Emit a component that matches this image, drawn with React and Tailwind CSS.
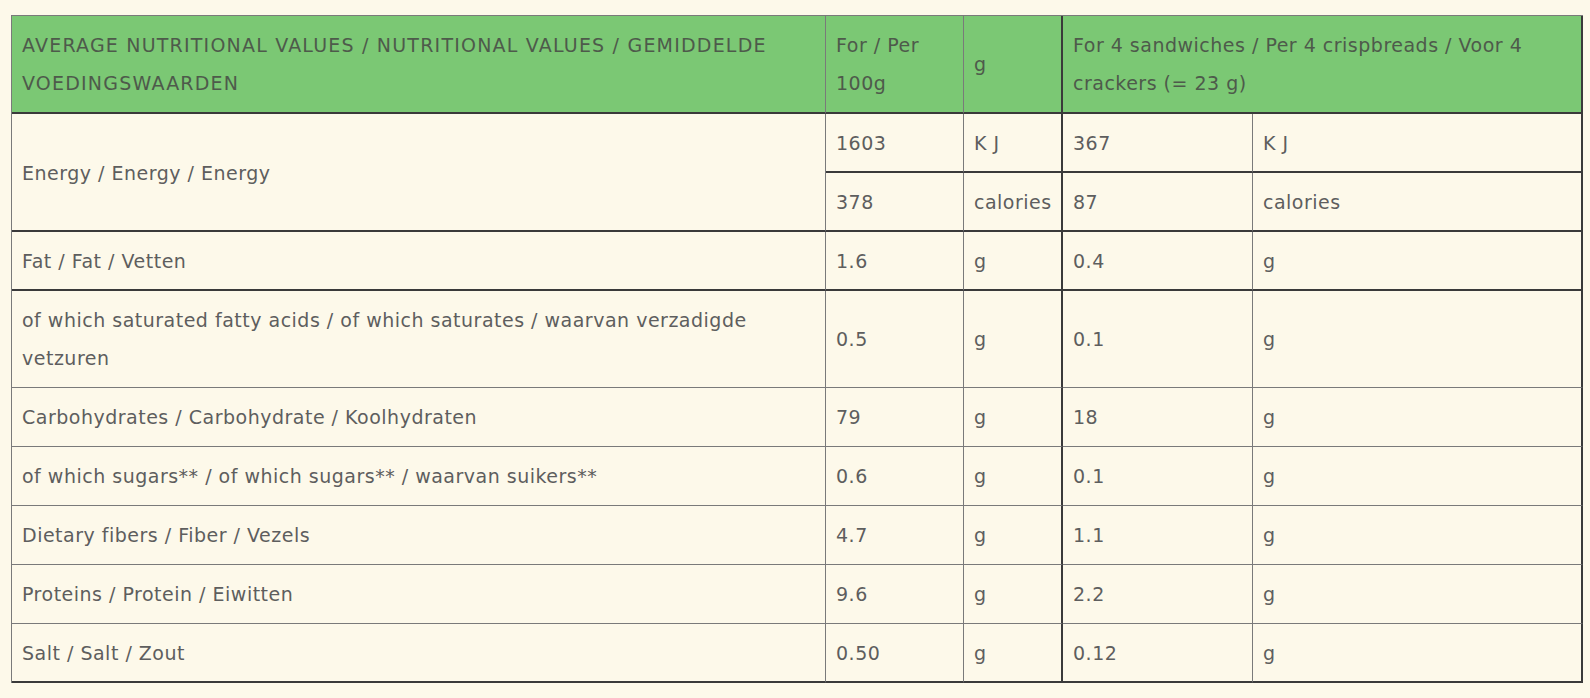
import React from "react";

const L = "border-b border-b-[#7a7a7a]";
const D = "border-b-2 border-b-[#3a3a3a]";

const rows = [
  { label: "Fat / Fat / Vetten", a: "1.6", au: "g", b: "0.4", bu: "g", dark: true },
  { label: "of which saturated fatty acids / of which saturates / waarvan verzadigde vetzuren", a: "0.5", au: "g", b: "0.1", bu: "g" },
  { label: "Carbohydrates / Carbohydrate / Koolhydraten", a: "79", au: "g", b: "18", bu: "g" },
  { label: "of which sugars** / of which sugars** / waarvan suikers**", a: "0.6", au: "g", b: "0.1", bu: "g" },
  { label: "Dietary fibers / Fiber / Vezels", a: "4.7", au: "g", b: "1.1", bu: "g" },
  { label: "Proteins / Protein / Eiwitten", a: "9.6", au: "g", b: "2.2", bu: "g" },
  { label: "Salt / Salt / Zout", a: "0.50", au: "g", b: "0.12", bu: "g", dark: true },
];

const cell = "px-[10px] pt-[10px] align-middle text-left font-normal";
const rl = "border-r border-r-[#7a7a7a]";
const rd = "border-r-2 border-r-[#3a3a3a]";
const pL = "pb-[10px]";
const pD = "pb-[9px]";

export default function App() {
  return (
    <div className="min-h-[698px] w-full bg-[#fdf9ea] pt-[15px] pl-[11px]" style={{ fontFamily: '"DejaVu Sans", "Liberation Sans", sans-serif' }}>
      <table className="w-[1571px] table-fixed border-separate border-spacing-0 border-l border-t border-[#7a7a7a] text-[19px] leading-[38px] tracking-[0.5px] text-[#5e5e5e] font-light">
        <colgroup>
          <col className="w-[814px]" />
          <col className="w-[138px]" />
          <col className="w-[99px]" />
          <col className="w-[190px]" />
          <col className="w-[330px]" />
        </colgroup>
        <thead>
          <tr className="bg-[#7bc874] text-[#4e5a4b]">
            <th className={`${cell} ${pL} ${rl} ${D} tracking-[1.2px]`}>AVERAGE NUTRITIONAL VALUES / NUTRITIONAL VALUES / GEMIDDELDE VOEDINGSWAARDEN</th>
            <th className={`${cell} ${pL} ${rl} ${D}`}>For / Per 100g</th>
            <th className={`${cell} ${pL} ${rd} ${D}`}>g</th>
            <th colSpan={2} className={`${cell} ${pL} ${rd} ${D}`}>For 4 sandwiches / Per 4 crispbreads / Voor 4 crackers (= 23 g)</th>
          </tr>
        </thead>
        <tbody>
          <tr>
            <td rowSpan={2} className={`${cell} ${pD} ${rl} ${D}`}>Energy / Energy / Energy</td>
            <td className={`${cell} ${pD} ${rl} ${D}`}>1603</td>
            <td className={`${cell} ${pD} ${rd} ${D}`}>K J</td>
            <td className={`${cell} ${pD} ${rl} ${D}`}>367</td>
            <td className={`${cell} ${pD} ${rd} ${D}`}>K J</td>
          </tr>
          <tr>
            <td className={`${cell} ${pD} ${rl} ${D}`}>378</td>
            <td className={`${cell} ${pD} ${rd} ${D}`}>calories</td>
            <td className={`${cell} ${pD} ${rl} ${D}`}>87</td>
            <td className={`${cell} ${pD} ${rd} ${D}`}>calories</td>
          </tr>
          {rows.map((r) => {
            const b = r.dark ? `${D} ${pD}` : `${L} ${pL}`;
            return (
              <tr key={r.label}>
                <td className={`${cell} ${rl} ${b}`}>{r.label}</td>
                <td className={`${cell} ${rl} ${b}`}>{r.a}</td>
                <td className={`${cell} ${rd} ${b}`}>{r.au}</td>
                <td className={`${cell} ${rl} ${b}`}>{r.b}</td>
                <td className={`${cell} ${rd} ${b}`}>{r.bu}</td>
              </tr>
            );
          })}
        </tbody>
      </table>
    </div>
  );
}
